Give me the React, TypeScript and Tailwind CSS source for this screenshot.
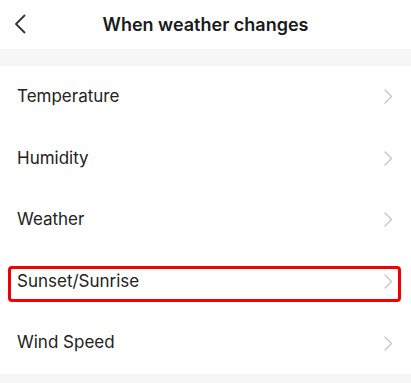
import React from "react";

const rows = ["Temperature", "Humidity", "Weather", "Sunset/Sunrise", "Wind Speed"];

function Chevron() {
  return (
    <svg width="9" height="15" viewBox="0 0 9 15" fill="none">
      <path d="M1 1l6.5 6.5L1 14" stroke="#c4c4c4" strokeWidth="1.3" strokeLinecap="round" strokeLinejoin="round" />
    </svg>
  );
}

export default function App() {
  return (
    <div className="w-[411px] h-[383px] bg-[#f6f6f6] overflow-hidden" style={{ fontFamily: "Inter, 'Liberation Sans', sans-serif" }}>
      <div className="h-[49px] bg-white relative flex items-center justify-center">
        <div className="absolute left-[14px] top-[14px]">
          <svg width="12" height="20" viewBox="0 0 12 20" fill="none">
            <path d="M10.5 1.5L2 10l8.5 8.5" stroke="#333" strokeWidth="1.8" strokeLinecap="round" strokeLinejoin="round" />
          </svg>
        </div>
        <span className="text-[18px] font-semibold text-[#1a1a1a]">When weather changes</span>
      </div>
      <div className="h-[17px]" />
      <div className="bg-white">
        {rows.map((r, i) => (
          <div key={r} className="relative h-[61.6px] flex items-center justify-between pl-[17px] pr-[18px]">
            <span className="text-[17px] text-[#222]">{r}</span>
            <Chevron />
            {i === 3 && (
              <div className="absolute left-[8px] right-[10px] top-[15px] h-[36px] border-[3px] border-[#f00000] rounded-[4px]" />
            )}
          </div>
        ))}
      </div>
    </div>
  );
}
